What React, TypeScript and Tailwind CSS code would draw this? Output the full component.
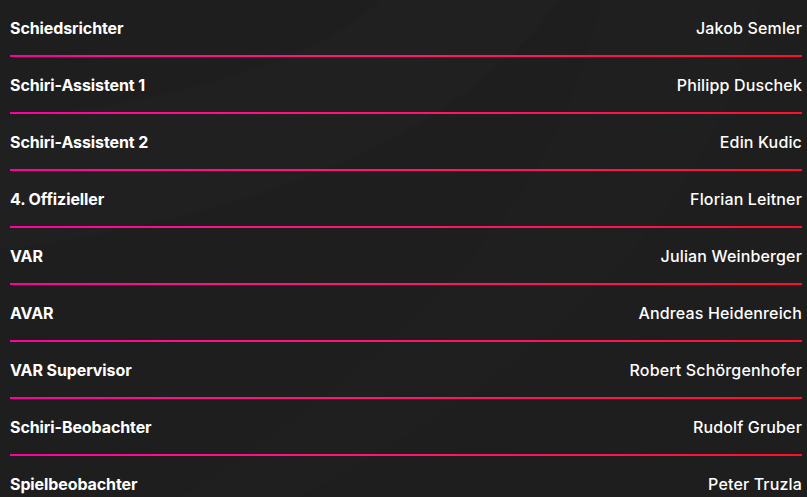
const officials = [
  { role: "Schiedsrichter", name: "Jakob Semler" },
  { role: "Schiri-Assistent 1", name: "Philipp Duschek" },
  { role: "Schiri-Assistent 2", name: "Edin Kudic" },
  { role: "4. Offizieller", name: "Florian Leitner" },
  { role: "VAR", name: "Julian Weinberger" },
  { role: "AVAR", name: "Andreas Heidenreich" },
  { role: "VAR Supervisor", name: "Robert Schörgenhofer" },
  { role: "Schiri-Beobachter", name: "Rudolf Gruber" },
  { role: "Spielbeobachter", name: "Peter Truzla" },
];

function Backdrop() {
  return (
    <svg className="absolute inset-0 w-full h-full pointer-events-none" viewBox="0 0 807 497" preserveAspectRatio="none">
      <path d="M380 0 L560 0 C 470 120 300 210 0 250 L0 120 C 180 100 320 60 380 0 Z" fill="#ffffff" opacity="0.01" />
      <path d="M600 0 L760 0 C 720 200 560 360 300 497 L180 497 C 420 340 560 200 600 0 Z" fill="#ffffff" opacity="0.007" />
    </svg>
  );
}

export default function App() {
  return (
    <div className="relative w-[807px] h-[497px] overflow-hidden bg-[#1e1e1e] font-['Inter','Liberation_Sans',sans-serif] text-white">
      <Backdrop />
      <ul className="relative pl-[10px] pr-[5px]">
        {officials.map((o) => (
          <li key={o.role}>
            <div className="h-[55px] flex items-center justify-between text-[16px] leading-none pt-[1px]">
              <span className="font-bold tracking-[-0.1px]">{o.role}</span>
              <span className="font-medium tracking-[0.15px]">{o.name}</span>
            </div>
            <div className="h-[2px] bg-gradient-to-r from-[#ff00a0] to-[#ff0d2a]" />
          </li>
        ))}
      </ul>
    </div>
  );
}
